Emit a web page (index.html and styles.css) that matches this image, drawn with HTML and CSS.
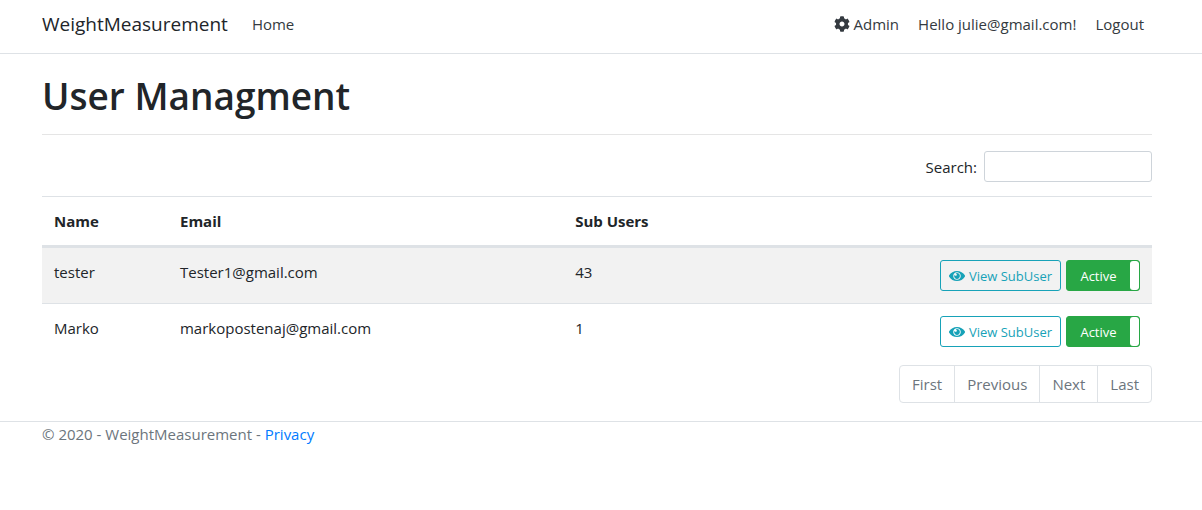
FILE: index.html
```html
<!DOCTYPE html>
<html lang="en">
<head>
<meta charset="utf-8">
<meta name="viewport" content="width=device-width, initial-scale=1">
<title>User Managment - WeightMeasurement</title>
<link rel="stylesheet" href="styles.css">
</head>
<body>
<svg class="sprite" aria-hidden="true">
  <symbol id="cog" viewBox="0 0 512 512"><path d="M487.4 315.7l-42.6-24.6c4.300-23.200 4.300-47 0-70.200l42.600-24.600c4.900-2.800 7.100-8.600 5.500-14-11.100-35.600-30-67.800-54.700-94.600-3.800-4.100-10-5.100-14.800-2.300L380.800 110c-17.900-15.400-38.500-27.300-60.800-35.100V25.800c0-5.600-3.900-10.500-9.400-11.700-36.700-8.200-74.300-7.800-109.200 0-5.500 1.200-9.400 6.100-9.400 11.700V75c-22.200 7.900-42.800 19.800-60.800 35.100L88.700 85.500c-4.900-2.800-11-1.900-14.800 2.300-24.700 26.700-43.600 58.900-54.700 94.600-1.700 5.400.6 11.200 5.500 14L67.300 221c-4.300 23.200-4.300 47 0 70.200l-42.600 24.600c-4.900 2.800-7.100 8.600-5.500 14 11.100 35.600 30 67.800 54.700 94.600 3.800 4.100 10 5.100 14.800 2.300l42.600-24.600c17.900 15.400 38.500 27.300 60.800 35.100v49.200c0 5.600 3.900 10.500 9.400 11.700 36.700 8.200 74.300 7.800 109.200 0 5.500-1.200 9.400-6.100 9.400-11.700v-49.200c22.200-7.900 42.800-19.800 60.800-35.100l42.600 24.600c4.900 2.800 11 1.900 14.800-2.300 24.700-26.700 43.600-58.900 54.700-94.600 1.500-5.500-.7-11.300-5.600-14.100zM256 336c-44.100 0-80-35.900-80-80s35.900-80 80-80 80 35.900 80 80-35.900 80-80 80z"/></symbol>
  <symbol id="eye" viewBox="0 0 576 512"><path d="M569.354 231.631C512.969 135.949 407.810 72 288 72 168.140 72 63.004 135.994 6.646 231.631a47.999 47.999 0 0 0 0 48.739C63.031 376.051 168.190 440 288 440c119.860 0 224.996-63.994 281.354-159.631a47.997 47.997 0 0 0 0-48.738zM288 392c-75.162 0-136-60.827-136-136 0-75.162 60.826-136 136-136 75.162 0 136 60.826 136 136 0 75.162-60.826 136-136 136zm104-136c0 57.438-46.562 104-104 104s-104-46.562-104-104c0-17.708 4.431-34.379 12.236-48.973l-.001.032c0 23.651 19.173 42.823 42.824 42.823s42.824-19.173 42.824-42.823c0-23.651-19.173-42.824-42.824-42.824l-.032.001C253.621 156.431 270.292 152 288 152c57.438 0 104 46.562 104 104z"/></symbol>
</svg>
<header class="header">
  <nav class="navbar page">
    <a class="brand" href="#">WeightMeasurement</a>
    <a class="nav-link" href="#">Home</a>
    <div class="nav-user">
      <a class="nav-link" href="#"><svg class="icon" aria-hidden="true"><use href="#cog"/></svg> Admin</a>
      <a class="nav-link" href="#">Hello julie@gmail.com!</a>
      <button class="nav-link logout" type="button">Logout</button>
    </div>
  </nav>
</header>
<main class="page">
  <h1 class="title">User Managment</h1>
  <div class="search">
    <label for="search">Search:</label>
    <input class="search-input" id="search" type="search">
  </div>
  <table class="table">
    <thead>
      <tr><th class="col-name">Name</th><th class="col-email">Email</th><th>Sub Users</th><th></th></tr>
    </thead>
    <tbody>
      <tr>
        <td>tester</td><td>Tester1@gmail.com</td><td>43</td>
        <td><div class="actions">
          <button class="btn btn-view" type="button"><svg class="icon" aria-hidden="true"><use href="#eye"/></svg> View SubUser</button>
          <button class="btn btn-toggle" type="button" aria-pressed="true"><span class="toggle-label">Active</span><span class="handle"></span></button>
        </div></td>
      </tr>
      <tr>
        <td>Marko</td><td>markopostenaj@gmail.com</td><td>1</td>
        <td><div class="actions">
          <button class="btn btn-view" type="button"><svg class="icon" aria-hidden="true"><use href="#eye"/></svg> View SubUser</button>
          <button class="btn btn-toggle" type="button" aria-pressed="true"><span class="toggle-label">Active</span><span class="handle"></span></button>
        </div></td>
      </tr>
    </tbody>
  </table>
  <nav class="pagination" aria-label="Pages">
    <a class="page-link" href="#">First</a>
    <a class="page-link" href="#">Previous</a>
    <a class="page-link" href="#">Next</a>
    <a class="page-link" href="#">Last</a>
  </nav>
</main>
<footer class="footer">
  <div class="page">© 2020 - WeightMeasurement - <a class="privacy" href="#">Privacy</a></div>
</footer>
</body>
</html>
```
FILE: styles.css
```css
* { box-sizing: border-box; }
body {
  margin: 0;
  background: #fff;
  color: #212529;
  font: 400 15px/24px "Open Sans", "Noto Sans", sans-serif;
}
a { text-decoration: none; }
button, input { font: inherit; }
.sprite { display: none; }
.page { padding-left: 42px; padding-right: 50px; }
.icon { width: 16px; height: 16px; fill: currentColor; }

.header { border-bottom: 1px solid #dee2e6; }
.navbar { display: flex; align-items: center; height: 53px; padding-bottom: 5px; }
.brand { color: #212529; font-size: 19px; margin-right: 16px; }
.nav-link { display: flex; align-items: center; gap: 4px; padding: 0 8px; color: #343a40; }
.nav-user { display: flex; gap: 3px; margin-left: auto; }
.logout { border: 0; background: none; }

.title {
  margin: 0 0 16px;
  padding: 18px 0 14px;
  border-bottom: 1px solid #e5e5e5;
  font-size: 37px;
  font-weight: 600;
  line-height: 48px;
}
.search { display: flex; justify-content: flex-end; align-items: center; gap: 7px; margin-bottom: 14px; }
.search-input { width: 168px; height: 31px; padding: 4px 8px; border: 1px solid #ced4da; border-radius: 3px; background: #fff; appearance: none; }

.table { width: 100%; border-spacing: 0; table-layout: fixed; margin-bottom: 6px; }
.table th, .table td { padding: 12px; text-align: left; vertical-align: top; border-top: 1px solid #dee2e6; }
.table th { font-weight: 700; border-bottom: 3px solid #dee2e6; }
.table tbody tr:first-child td { border-top: 0; background: #f2f2f2; }
.col-name { width: 11.35%; }
.col-email { width: 35.6%; }
.actions { display: flex; justify-content: flex-end; gap: 5px; }
.btn { display: flex; align-items: center; height: 31px; border: 1px solid; border-radius: 3px; font-size: 13px; white-space: nowrap; }
.btn-view { gap: 4px; padding: 0 8px; background: transparent; color: #17a2b8; }
.btn-toggle { width: 74px; padding: 0; border-color: #28a745; background: #28a745; color: #fff; overflow: hidden; }
.toggle-label { flex: 1; text-align: center; }
.handle { width: 9px; height: 29px; border-radius: 3px; background: #fff; }

.pagination { display: flex; justify-content: flex-end; margin-bottom: 18px; }
.page-link { padding: 6px 12px; border: 1px solid #dee2e6; margin-left: -1px; color: #6c757d; }
.page-link:first-child { border-radius: 4px 0 0 4px; }
.page-link:last-child { border-radius: 0 4px 4px 0; }
.footer { border-top: 1px solid #dee2e6; color: #6c757d; }
.privacy { color: #007bff; }
```
